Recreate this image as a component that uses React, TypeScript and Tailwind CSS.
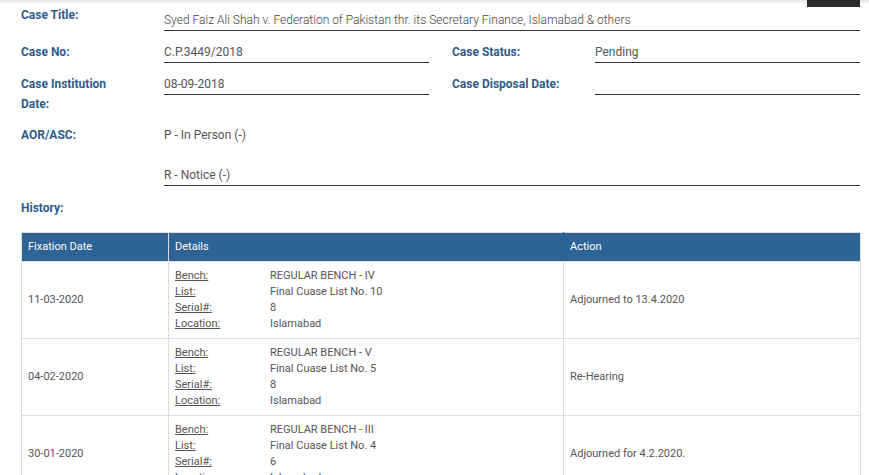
import React from "react";

const rows = [
  { date: "11-03-2020", bench: "REGULAR BENCH - IV", list: "Final Cuase List No. 10", serial: "8", location: "Islamabad", action: "Adjourned to 13.4.2020" },
  { date: "04-02-2020", bench: "REGULAR BENCH - V", list: "Final Cuase List No. 5", serial: "8", location: "Islamabad", action: "Re-Hearing" },
  { date: "30-01-2020", bench: "REGULAR BENCH - III", list: "Final Cuase List No. 4", serial: "6", location: "Islamabad", action: "Adjourned for 4.2.2020." },
];

const label = "text-[12px] leading-[20px] font-bold text-[#2f5b8c]";
const value = "text-[12px] leading-[20px] text-[#555] border-b border-[#333]";

export default function App() {
  return (
    <div className="relative bg-white w-[869px] min-h-[475px] overflow-hidden" style={{ fontFamily: "Roboto, 'Liberation Sans', sans-serif" }}>
      <div className="absolute left-0 top-0 w-full h-[4px] bg-gradient-to-b from-[#e6e6e6] to-white" />
      <div className="absolute left-[807px] top-0 w-[53px] h-[7px] bg-[#2b2b2b]" />

      <div className="pl-[21px] pr-[9px] pt-[5px]">
        <div className="grid grid-cols-[143px_265px_23px_143px_265px]">
          {/* Title */}
          <div className={label}>Case Title:</div>
          <div className="col-span-4 pt-[5px]">
            <div className="text-[12px] font-light leading-[20px] text-[#444] border-b border-[#333]">Syed Faiz Ali Shah v. Federation of Pakistan thr. its Secretary Finance, Islamabad &amp; others</div>
          </div>

          {/* Case No / Status */}
          <div className={`${label} mt-[11px]`}>Case No:</div>
          <div className={`${value} mt-[11px]`}>C.P.3449/2018</div>
          <div />
          <div className={`${label} mt-[11px]`}>Case Status:</div>
          <div className={`${value} mt-[11px]`}>Pending</div>

          {/* Institution / Disposal */}
          <div className={`${label} mt-[11px] leading-[19px]`}>Case Institution<br />Date:</div>
          <div className="mt-[11px]">
            <div className={value}>08-09-2018</div>
          </div>
          <div />
          <div className={`${label} mt-[11px] leading-[19px]`}>Case Disposal Date:</div>
          <div className="mt-[11px]">
            <div className={`${value} h-[21px]`}></div>
          </div>

          {/* AOR */}
          <div className={`${label} mt-[11px]`}>AOR/ASC:</div>
          <div className="col-span-4 mt-[11px]">
            <div className="text-[12px] leading-[20px] text-[#555]">P - In Person (-)</div>
            <div className={`${value} mt-[20px]`}>R - Notice (-)</div>
          </div>
        </div>

        <div className={`${label} mt-[12px]`}>History:</div>

        <table className="mt-[14px] w-[839px] table-fixed border-collapse text-[11px]">
          <colgroup>
            <col className="w-[147px]" />
            <col className="w-[395px]" />
            <col className="w-[297px]" />
          </colgroup>
          <thead>
            <tr className="bg-[#2e6395] text-white">
              <th className="border border-[#ddd] text-left font-normal px-[6px] py-[7px] leading-[14px]">Fixation Date</th>
              <th className="border border-[#ddd] border-l-[#2e6395] border-r-[#2e6395] text-left font-normal px-[6px] py-[7px] leading-[14px]">Details</th>
              <th className="border border-[#ddd] text-left font-normal px-[6px] py-[7px] leading-[14px]">Action</th>
            </tr>
          </thead>
          <tbody>
            {rows.map((r) => (
              <tr key={r.date}>
                <td className="border border-[#ddd] px-[6px] py-[6px] align-middle text-[#555]">{r.date}</td>
                <td className="border border-[#ddd] px-[6px] py-[6px] align-middle text-[#555]">
                  <div className="grid grid-cols-[95px_1fr] leading-[16px]">
                    <span className="underline">Bench:</span>
                    <span>{r.bench}</span>
                    <span className="underline">List:</span>
                    <span>{r.list}</span>
                    <span className="underline">Serial#:</span>
                    <span>{r.serial}</span>
                    <span className="underline">Location:</span>
                    <span>{r.location}</span>
                  </div>
                </td>
                <td className="border border-[#ddd] px-[6px] py-[6px] align-middle text-[#555]">{r.action}</td>
              </tr>
            ))}
          </tbody>
        </table>
      </div>
    </div>
  );
}
